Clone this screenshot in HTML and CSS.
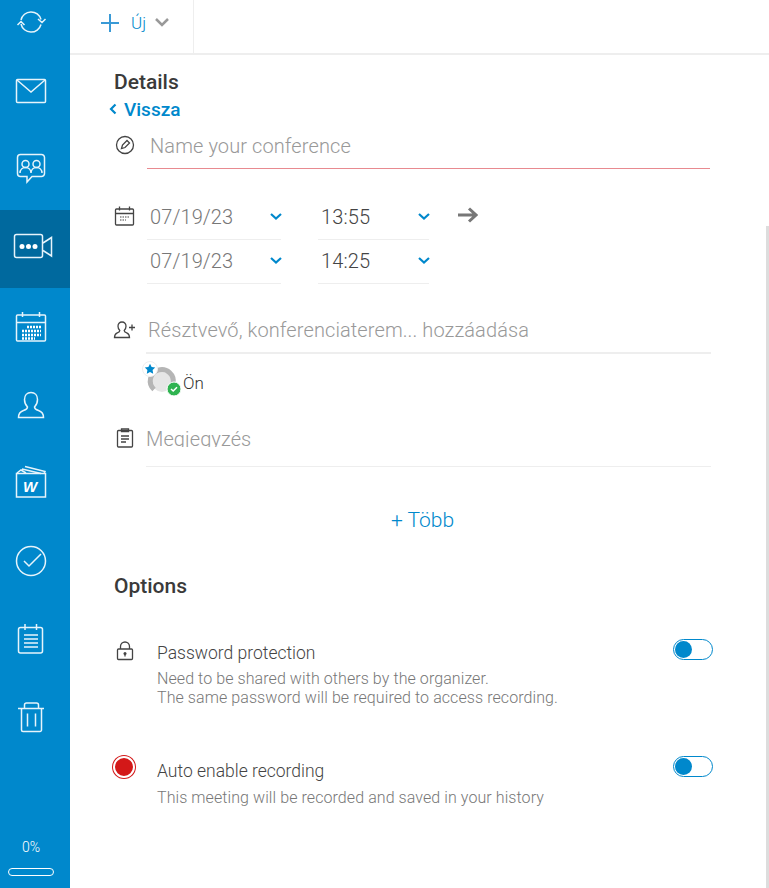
FILE: index.html
```html
<!DOCTYPE html>
<html lang="en">
<head>
  <meta charset="UTF-8" />
  <title>Conference details</title>
  <link rel="stylesheet" href="styles.css">
</head>
<body>

<div class="app">
  <nav class="sidebar">
    <a class="nav-item first">
      <svg width="40" height="40" viewBox="0 0 40 40"><path d="M6 18A10.300 10.300 0 0 1 26 17.500M26 22.500A10.300 10.300 0 0 1 6 22"/><path d="M23 17l4 3.500 3.500-3.500M2.500 23l3.500-3.500 3.500 3.500"/></svg>
    </a>
    <a class="nav-item">
      <svg width="40" height="40" viewBox="0 0 40 40"><rect x="1.500" y="6.500" width="29" height="23" rx="1"/><path d="M2 7l14 12L30 7"/></svg>
    </a>
    <a class="nav-item">
      <svg width="40" height="40" viewBox="0 0 40 40"><path d="M5.500 3.500h21a3 3 0 0 1 3 3v16a3 3 0 0 1-3 3H17l-5 5.500v-5.500H5.500a3 3 0 0 1-3-3v-16a3 3 0 0 1 3-3z"/><circle cx="10.500" cy="13" r="3.500"/><circle cx="21.500" cy="13" r="3.500"/><path d="M5 22c0-3.500 2.500-5.500 5.500-5.500S16 18.500 16 22M16 22c0-3.500 2.500-5.500 5.500-5.500S27 18.500 27 22"/></svg>
    </a>
    <a class="nav-item active">
      <svg width="44" height="40" viewBox="-2 0 44 40"><rect x="-.5" y="5.500" width="28" height="23" rx="2"/><path d="M28 14l8.500-5.500v18.500L28 21.500"/><circle class="solid" cx="7" cy="17.500" r="2.500"/><circle class="solid" cx="13.500" cy="17.500" r="2.500"/><circle class="solid" cx="20" cy="17.500" r="2.500"/></svg>
    </a>
    <a class="nav-item">
      <svg width="40" height="40" viewBox="0 0 40 40"><rect x="1.500" y="8" width="29" height="26" rx="1"/><path d="M2 15.500h28M7.500 5v5M24.500 5v5"/><path class="dash" d="M12 20h14M7 24h19M7 28h19M7 31.500h13"/></svg>
    </a>
    <a class="nav-item">
      <svg width="40" height="40" viewBox="0 0 40 40"><path d="M16 7.500c-4 0-6.500 3-6.500 7 0 3 1 5.500 3 7.500 0 1.500-1 2.500-4 3.500-3.500 1.200-5 3-5 7h25c0-4-1.500-5.800-5-7-3-1-4-2-4-3.500 2-2 3-4.500 3-7.500 0-4-2.500-7-6.500-7z"/></svg>
    </a>
    <a class="nav-item">
      <svg width="40" height="40" viewBox="0 0 40 40"><rect x="1.500" y="10.500" width="29" height="23.500"/><path d="M2 10l4-3 5 3M10 3.500l20 5-1 2M7 6l19 4.500"/><text x="15" y="29" text-anchor="middle" class="logo-letter">W</text></svg>
    </a>
    <a class="nav-item">
      <svg width="40" height="40" viewBox="0 0 40 40"><circle cx="16" cy="20" r="14.500"/><path d="M9 20l5 5 12-12"/></svg>
    </a>
    <a class="nav-item">
      <svg width="40" height="40" viewBox="0 0 40 40"><rect x="3.500" y="8.500" width="24" height="25.500" rx="2"/><path d="M10 5v6M21.500 5v6M9 16h14M9 20h14M9 24h14M9 28h14"/></svg>
    </a>
    <a class="nav-item">
      <svg width="40" height="40" viewBox="0 0 40 40"><path d="M3 11.500h26M6.500 11.500V33a1.500 1.500 0 0 0 1.500 1.500h17a1.500 1.500 0 0 0 1.500-1.500V11.500M9.500 11.500V8a2 2 0 0 1 2-2h10a2 2 0 0 1 2 2v3.500M12.500 16.500v13M20.500 16.500v13"/></svg>
    </a>
    <div class="quota">
      <span class="quota-label">0%</span>
      <span class="quota-bar"></span>
    </div>
  </nav>

  <main class="main">
    <div class="toolbar">
      <div class="new-button">
        <svg class="plus" width="18" height="18" viewBox="0 0 18 18"><path d="M9 0v18M0 9h18"/></svg>
        <span class="new-label">Új</span>
        <svg class="caret" width="14" height="9" viewBox="0 0 14 9"><path d="M1 1l6 6 6-6"/></svg>
      </div>
    </div>

    <div class="content">
      <h2 class="section-title">Details</h2>
      <a class="back-link">
        <svg width="8" height="12" viewBox="0 0 8 12"><path d="M6.500 1.500L2 6l4.500 4.500"/></svg>
        Vissza
      </a>

      <div class="row name-row">
        <span class="row-icon">
          <svg width="20" height="20" viewBox="0 0 20 20"><circle cx="10" cy="10" r="8.500"/><path d="M6.500 13.500l1-3.500 4.500-4.500 2.500 2.500-4.500 4.500z"/></svg>
        </span>
        <div class="field name-field">Name your conference</div>
      </div>

      <div class="row date-row">
        <span class="row-icon">
          <svg width="20" height="20" viewBox="0 0 20 20"><rect x=".5" y="3" width="18" height="16" rx="1"/><path d="M1 7.500h18M4.500 .5v4M14.500 .5v4"/><path class="thin-dash" d="M5 11h9M5 14h6"/></svg>
        </span>
        <div class="date-grid">
          <div class="select date-select"><span>07/19/23</span><svg class="chev" width="12" height="7" viewBox="0 0 12 7"><path d="M1 1l5 4.500L11 1"/></svg></div>
          <div class="select time-select"><span>13:55</span><svg class="chev" width="12" height="7" viewBox="0 0 12 7"><path d="M1 1l5 4.500L11 1"/></svg></div>
          <svg class="arrow" width="20" height="16" viewBox="0 0 20 16"><path d="M0 8h18M11 1.500L18 8l-7 6.500"/></svg>
          <div class="select date-select"><span>07/19/23</span><svg class="chev" width="12" height="7" viewBox="0 0 12 7"><path d="M1 1l5 4.500L11 1"/></svg></div>
          <div class="select time-select"><span>14:25</span><svg class="chev" width="12" height="7" viewBox="0 0 12 7"><path d="M1 1l5 4.500L11 1"/></svg></div>
        </div>
      </div>

      <div class="row attendee-row">
        <span class="row-icon">
          <svg width="22" height="18" viewBox="0 0 22 18"><path d="M8 1c-2.500 0-4 1.800-4 4.200 0 1.800.7 3.300 1.800 4.300 0 1.200-.8 1.800-2.500 2.400C1.500 12.600.5 14 .5 16.500h15c0-2.500-1-3.900-2.800-4.600-1.700-.6-2.500-1.200-2.500-2.400C11.300 8.500 12 7 12 5.200 12 2.800 10.500 1 8 1z"/><path d="M15 6.500h6M18 3.500v6"/></svg>
        </span>
        <div class="field attendee-field">Résztvevő, konferenciaterem... hozzáadása</div>
      </div>

      <div class="me-row">
        <svg class="avatar" width="40" height="36" viewBox="0 0 40 36">
          <circle class="avatar-face" cx="20" cy="21" r="10"/>
          <path class="avatar-ring" d="M12 28.500A11.500 11.500 0 1 1 31 22.500"/>
          <circle class="badge-white" cx="8" cy="8" r="7.500"/>
          <path class="star" d="M8 2.800l1.600 3.300 3.600.5-2.600 2.500.6 3.600L8 11l-3.200 1.700.6-3.600-2.600-2.500 3.600-.5z"/>
          <circle class="badge-green" cx="32" cy="28" r="7"/>
          <path class="badge-tick" d="M29 28l2.200 2 3.800-3.800"/>
        </svg>
        <span class="me-name">Ön</span>
      </div>

      <div class="row note-row">
        <span class="row-icon">
          <svg width="18" height="20" viewBox="0 0 18 20"><rect x="1.500" y="2.500" width="15" height="16.500" rx="1"/><path d="M5.500 1h7v2.500h-7zM5 8h8M5 11h8M5 14h5"/></svg>
        </span>
        <div class="field note-field"><span class="note-text">Megjegyzés</span></div>
      </div>

      <a class="more-link">+ Több</a>

      <h2 class="section-title options-title">Options</h2>

      <div class="option password-option">
        <span class="option-icon">
          <svg width="18" height="20" viewBox="0 0 18 20"><rect x="1.500" y="8" width="15" height="10.500" rx="1"/><path d="M4.500 8V5.500a4.500 4.500 0 0 1 9 0V8"/><circle class="lock-dot" cx="9" cy="12.500" r="1.500"/><path d="M9 13v2.500"/></svg>
        </span>
        <div class="option-text">
          <div class="option-name">Password protection</div>
          <div class="option-desc">Need to be shared with others by the organizer.<br>The same password will be required to access recording.</div>
        </div>
        <span class="toggle"><span class="toggle-knob"></span></span>
      </div>

      <div class="option record-option">
        <span class="record-dot"></span>
        <div class="option-text">
          <div class="option-name">Auto enable recording</div>
          <div class="option-desc">This meeting will be recorded and saved in your history</div>
        </div>
        <span class="toggle"><span class="toggle-knob"></span></span>
      </div>
    </div>
  </main>

  <div class="scrollbar"></div>
</div>

</body>
</html>
```

FILE: styles.css
```css
* { box-sizing: border-box; }

html, body {
  margin: 0;
  height: 100%;
  overflow: hidden;
}

body {
  font-family: 'Roboto', 'Liberation Sans', sans-serif;
  background-color: white;
  color: #3a3a3a;
}

.app {
  display: flex;
  height: 888px;
  position: relative;
}

/* sidebar */
.sidebar {
  width: 70px;
  flex-shrink: 0;
  background-color: #0088cc;
  display: flex;
  flex-direction: column;
}

.nav-item {
  height: 78px;
  display: flex;
  align-items: center;
  justify-content: center;
  flex-shrink: 0;
}

.nav-item.first {
  height: 54px;
  padding-bottom: 10px;
}

.nav-item.active { background-color: #00699e; }

.nav-item svg {
  fill: none;
  stroke: #e6f4fb;
  stroke-width: 1.500;
  overflow: visible;
}

.nav-item svg .solid {
  fill: white;
  stroke: none;
}

.nav-item svg .dash {
  stroke-width: 2.500;
  stroke-dasharray: 2 1;
  stroke: white;
}

.nav-item svg .logo-letter {
  font-family: 'Liberation Sans', sans-serif;
  font-size: 15px;
  font-weight: bold;
  font-style: italic;
  fill: white;
  stroke: none;
}

.quota {
  margin-top: auto;
  padding: 0 8px 12px;
  display: flex;
  flex-direction: column;
  align-items: flex-start;
  gap: 13px;
}

.quota-label {
  margin-left: 14px;
  font-size: 14px;
  font-weight: 300;
  line-height: 16px;
  color: white;
}

.quota-bar {
  display: block;
  width: 46px;
  height: 8px;
  border: 1px solid white;
  border-radius: 4px;
}

/* main */
.main {
  flex: 1;
  min-width: 0;
}

.toolbar {
  height: 55px;
  border-bottom: 2px solid #eeeeee;
}

.new-button {
  width: 124px;
  height: 53px;
  border-right: 1px solid #eeeeee;
  display: flex;
  align-items: center;
  padding: 0 0 8px 31px;
}

.plus {
  fill: none;
  stroke: #3a9ad6;
  stroke-width: 2;
}

.new-label {
  margin-left: 12px;
  font-size: 17px;
  font-weight: 300;
  color: #0088cc;
}

.caret {
  margin-left: 9px;
  fill: none;
  stroke: #999;
  stroke-width: 2.500;
}

.content { padding: 14px 58px 0 44px; }

.section-title {
  margin: 0;
  font-size: 21px;
  font-weight: 500;
  line-height: 26px;
  color: #3a3a3a;
}

.back-link {
  display: flex;
  align-items: center;
  gap: 7px;
  margin-left: -5px;
  height: 22px;
  margin-top: 3px;
  font-size: 19px;
  font-weight: 500;
  color: #0088cc;
}

.back-link svg {
  fill: none;
  stroke: #0088cc;
  stroke-width: 2.200;
}

.row { display: flex; }

.row-icon {
  width: 33px;
  flex-shrink: 0;
  display: flex;
}

.row-icon svg {
  fill: none;
  stroke: #444;
  stroke-width: 1.300;
  overflow: visible;
}

.row-icon .thin-dash {
  stroke-dasharray: 1.500 1;
  stroke-width: 1.200;
}

.field {
  font-size: 20px;
  font-weight: 300;
  letter-spacing: .1px;
  color: #999;
}

.name-row { margin-top: 10px; }
.name-row .row-icon { padding: 5px 0 0 1px; }

.name-field {
  flex: 1;
  height: 39px;
  line-height: 32px;
  margin-right: 1px;
  padding-left: 3px;
  border-bottom: 1px solid #e88a90;
}

.date-row { margin-top: 27px; }
.date-row .row-icon { padding: 10px 0 0 1px; }

.date-grid {
  display: grid;
  grid-template-columns: 134px 111px 20px;
  column-gap: 37px;
  row-gap: 0;
  align-items: start;
}

.date-grid .arrow {
  margin: 11px 0 0 -8px;
  fill: none;
  stroke: #777;
  stroke-width: 3;
}

.select {
  height: 44px;
  padding: 0 0 2px 3px;
  display: flex;
  align-items: center;
  justify-content: space-between;
  border-bottom: 1px solid #eeeeee;
  font-size: 20px;
  font-weight: 300;
  letter-spacing: .1px;
}

.date-select { color: #777; }
.time-select { color: #444; }

.chev {
  fill: none;
  stroke: #0088cc;
  stroke-width: 2.200;
  margin: 0 -1px 0 0;
}

.attendee-row { margin-top: 24px; }
.attendee-row .row-icon { padding: 13px 0 0 0; }

.attendee-field {
  flex: 1;
  height: 46px;
  line-height: 44px;
  margin-left: -1px;
  padding-left: 2px;
  border-bottom: 2px solid #eeeeee;
}

.me-row {
  display: flex;
  margin: 7px 0 0 28px;
  height: 36px;
}

.avatar { flex-shrink: 0; }
.avatar-ring { fill: none; stroke: #b5b5b5; stroke-width: 5; }
.avatar-face { fill: #e6e6e6; }
.badge-white { fill: white; stroke: #eeeeee; stroke-width: 1; }
.star { fill: #0088cc; }
.badge-green { fill: #2fb350; stroke: white; stroke-width: 1; }
.badge-tick { fill: none; stroke: white; stroke-width: 1.500; }

.me-name {
  font-size: 17px;
  font-weight: 300;
  line-height: 24px;
  margin: 10px 0 0 1px;
  color: #333;
}

.note-row { margin-top: 30px; }
.note-row .row-icon { padding: 1px 0 0 2px; }

.note-field {
  flex: 1;
  margin-left: -1px;
  height: 40px;
  border-bottom: 1px solid #eeeeee;
}

.note-text {
  display: block;
  height: 20px;
  line-height: 24px;
  overflow: hidden;
}

.more-link {
  display: block;
  margin: 41px 0 0 20px;
  text-align: center;
  font-size: 21px;
  font-weight: 300;
  line-height: 24px;
  color: #0088cc;
}

.options-title { margin-top: 41px; }

.option {
  display: flex;
  align-items: flex-start;
}

.password-option { margin-top: 42px; }
.record-option { margin-top: 52px; }

.option-icon {
  width: 43px;
  flex-shrink: 0;
  padding-left: 2px;
}

.option-icon svg {
  fill: none;
  stroke: #444;
  stroke-width: 1.300;
}

.option-icon .lock-dot { fill: #444; stroke: none; }

.record-dot {
  width: 22px;
  height: 22px;
  margin: -3px 22px 0 -1px;
  flex-shrink: 0;
  border-radius: 50%;
  background-color: #d31818;
  border: 2px solid white;
  box-shadow: 0 0 0 1px #d31818;
}

.option-text { flex: 1; }

.option-name {
  font-size: 17.500px;
  font-weight: 300;
  line-height: 24px;
  color: #444;
}

.option-desc {
  margin-top: 4px;
  font-size: 16px;
  font-weight: 300;
  letter-spacing: .08px;
  line-height: 19px;
  color: #777;
}

.record-option .option-desc { margin-top: 5px; }

.toggle {
  width: 40px;
  height: 21px;
  margin: -2px -2px 0 0;
  flex-shrink: 0;
  padding: 1px;
  border: 1px solid #0088cc;
  border-radius: 11px;
}

.record-option .toggle { margin-top: -3px; }

.toggle-knob {
  display: block;
  width: 17px;
  height: 17px;
  border-radius: 50%;
  background-color: #0088cc;
}

.scrollbar {
  position: absolute;
  top: 226px;
  right: 0;
  bottom: 0;
  width: 3px;
  background-color: #dddddd;
}
```
